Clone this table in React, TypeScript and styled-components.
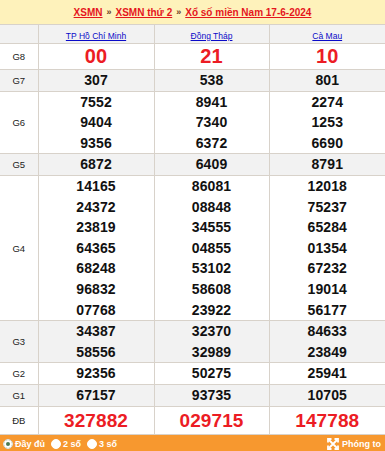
import styled, { createGlobalStyle } from 'styled-components';

const GlobalStyle = createGlobalStyle`
  body {
    margin: 0;
    background: #fff;
    font-family: "Liberation Sans", Arial, sans-serif;
  }
`;

const provinces = ['TP Hồ Chí Minh', 'Đồng Tháp', 'Cà Mau'];

type Prize = { label: string; big?: boolean; special?: boolean; values: string[][] };

const prizes: Prize[] = [
  { label: 'G8', big: true, values: [['00'], ['21'], ['10']] },
  { label: 'G7', values: [['307'], ['538'], ['801']] },
  {
    label: 'G6',
    values: [
      ['7552', '9404', '9356'],
      ['8941', '7340', '6372'],
      ['2274', '1253', '6690'],
    ],
  },
  { label: 'G5', values: [['6872'], ['6409'], ['8791']] },
  {
    label: 'G4',
    values: [
      ['14165', '24372', '23819', '64365', '68248', '96832', '07768'],
      ['86081', '08848', '34555', '04855', '53102', '58608', '23922'],
      ['12018', '75237', '65284', '01354', '67232', '19014', '56177'],
    ],
  },
  {
    label: 'G3',
    values: [
      ['34387', '58556'],
      ['32370', '32989'],
      ['84633', '23849'],
    ],
  },
  { label: 'G2', values: [['92356'], ['50275'], ['25941']] },
  { label: 'G1', values: [['67157'], ['93735'], ['10705']] },
  { label: 'ĐB', special: true, values: [['327882'], ['029715'], ['147788']] },
];

export default function App() {
  return (
    <>
      <GlobalStyle />
      <Wrapper>
        <TitleBar>
          <TitleLink>XSMN</TitleLink>
          <Sep>»</Sep>
          <TitleLink>XSMN thứ 2</TitleLink>
          <Sep>»</Sep>
          <TitleLink>Xổ số miền Nam 17-6-2024</TitleLink>
        </TitleBar>
        <ResultTable>
          <colgroup>
            <col style={{ width: 38 }} />
            <col style={{ width: 116 }} />
            <col style={{ width: 115 }} />
            <col style={{ width: 116 }} />
          </colgroup>
          <tbody>
            <Row $shade>
              <HeadCell />
              {provinces.map(p => (
                <HeadCell key={p}>
                  <ProvinceLink>{p}</ProvinceLink>
                </HeadCell>
              ))}
            </Row>
            {prizes.map((prize, idx) => (
              <Row key={prize.label} $shade={idx % 2 === 1}>
                <LabelCell>{prize.label}</LabelCell>
                {prize.values.map((col, ci) => (
                  <NumCell key={ci}>
                    {col.map(n => (
                      <Num key={n} $big={prize.big} $special={prize.special}>
                        {n}
                      </Num>
                    ))}
                  </NumCell>
                ))}
              </Row>
            ))}
          </tbody>
        </ResultTable>
        <Footer>
          <Options>
            <Option>
              <Radio $checked />
              Đầy đủ
            </Option>
            <Option>
              <Radio />2 số
            </Option>
            <Option>
              <Radio />3 số
            </Option>
          </Options>
          <Zoom>
            <svg width="12" height="12" viewBox="0 0 12 12" fill="none" stroke="#fff" strokeWidth="1.8">
              <path d="M2 2 L10 10 M10 2 L2 10" />
              <path d="M1 4.5 V1 H4.5 M7.5 1 H11 V4.5 M11 7.5 V11 H7.5 M4.5 11 H1 V7.5" />
            </svg>
            Phóng to
          </Zoom>
        </Footer>
      </Wrapper>
    </>
  );
}

const Wrapper = styled.div`
  width: 385px;
  overflow: hidden;
`;

const TitleBar = styled.div`
  height: 24px;
  background: #fef2bb;
  display: flex;
  align-items: center;
  justify-content: center;
  gap: 4px;
  font-size: 10px;
  font-weight: bold;
`;

const TitleLink = styled.a`
  color: #e5161d;
  text-decoration: underline;
`;

const Sep = styled.span`
  color: #6b3a1a;
  font-size: 9px;
`;

const ResultTable = styled.table`
  width: 385px;
  border-collapse: collapse;
  table-layout: fixed;

  td {
    border: 1px solid #d8d2ca;
    padding: 0;
    text-align: center;
  }
  td:first-child {
    border-left: none;
  }
  td:last-child {
    border-right: none;
  }
`;

const Row = styled.tr<{ $shade?: boolean }>`
  background: ${p => (p.$shade ? '#f2f2f2' : '#fff')};
`;

const HeadCell = styled.td`
  height: 18px;
`;

const ProvinceLink = styled.a`
  color: #0a0ac8;
  font-size: 8.5px;
  text-decoration: underline;
`;

const LabelCell = styled.td`
  font-size: 9.5px;
  color: #222;
`;

const NumCell = styled.td``;

const Num = styled.div<{ $big?: boolean; $special?: boolean }>`
  font-weight: bold;
  font-size: ${p => (p.$big ? '20px' : p.$special ? '19px' : '14px')};
  line-height: ${p => (p.$big ? '25px' : p.$special ? '27px' : '20.6px')};
  color: ${p => (p.$big || p.$special ? '#ec1c24' : '#111')};
  letter-spacing: 0.1px;
`;

const Footer = styled.div`
  height: 18px;
  background: #f7982f;
  display: flex;
  align-items: center;
  justify-content: space-between;
  padding: 0 4px 0 3px;
  color: #fff;
  font-size: 9px;
  font-weight: bold;
`;

const Options = styled.div`
  display: flex;
  align-items: center;
  gap: 6px;
`;

const Option = styled.span`
  display: flex;
  align-items: center;
  gap: 2px;
`;

const Radio = styled.span<{ $checked?: boolean }>`
  width: 10px;
  height: 10px;
  border-radius: 50%;
  background: ${p => (p.$checked ? '#4a7a52' : '#fff')};
  box-shadow: inset 0 0 0 ${p => (p.$checked ? '2px' : '0')} #fff;
  border: 1px solid ${p => (p.$checked ? '#e6e6e6' : '#fff')};
  box-sizing: border-box;
`;

const Zoom = styled.span`
  display: flex;
  align-items: center;
  gap: 3px;
`;
